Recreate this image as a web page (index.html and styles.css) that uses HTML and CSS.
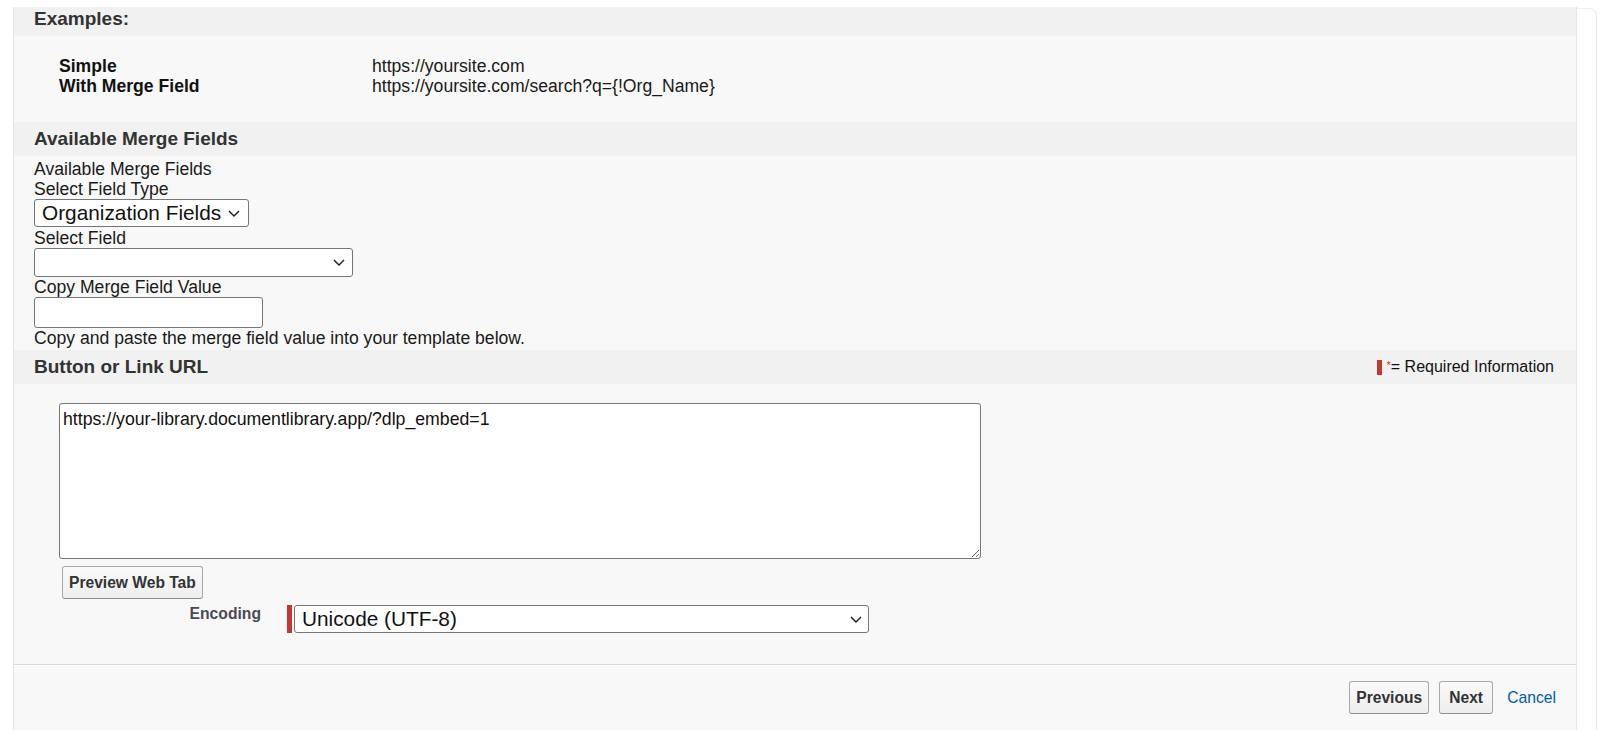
FILE: index.html
```html
<!DOCTYPE html>
<html lang="en">
<head>
<meta charset="utf-8">
<title>Button or Link URL</title>
<link rel="stylesheet" href="styles.css">
</head>
<body>
<div class="page">
  <div class="panel">
    <div class="band band-first">Examples:</div>
    <div class="examples">
      <div class="ex-label">Simple</div>
      <div class="ex-value">https://yoursite.com</div>
      <div class="ex-label">With Merge Field</div>
      <div class="ex-value">https://yoursite.com/search?q={!Org_Name}</div>
    </div>

    <div class="band">Available Merge Fields</div>
    <div class="merge">
      <div class="line">Available Merge Fields</div>
      <div class="line">Select Field Type</div>
      <div class="select select-type" role="combobox">
        <span class="select-text">Organization Fields</span>
        <svg class="chev" width="12" height="7" viewBox="0 0 12 7"><path d="M1 1l5 5 5-5" fill="none" stroke="#1a1a1a" stroke-width="1.4"/></svg>
      </div>
      <div class="line">Select Field</div>
      <div class="select select-field" role="combobox">
        <span class="select-text"></span>
        <svg class="chev" width="12" height="7" viewBox="0 0 12 7"><path d="M1 1l5 5 5-5" fill="none" stroke="#1a1a1a" stroke-width="1.4"/></svg>
      </div>
      <div class="line">Copy Merge Field Value</div>
      <input class="copy-input" type="text" value="">
      <div class="line">Copy and paste the merge field value into your template below.</div>
    </div>

    <div class="band band-split">
      <span>Button or Link URL</span>
      <span class="legend"><span class="req-bar"></span><span class="req-star">*</span>= Required Information</span>
    </div>
    <div class="url">
      <textarea class="url-area" spellcheck="false">https://your-library.documentlibrary.app/?dlp_embed=1</textarea>
      <div class="preview-row"><button class="btn" type="button">Preview Web Tab</button></div>
      <div class="enc-row">
        <div class="enc-label">Encoding</div>
        <div class="req-field">
          <span class="req-bar tall"></span>
          <div class="select select-enc" role="combobox">
            <span class="select-text">Unicode (UTF-8)</span>
            <svg class="chev" width="12" height="7" viewBox="0 0 12 7"><path d="M1 1l5 5 5-5" fill="none" stroke="#1a1a1a" stroke-width="1.4"/></svg>
          </div>
        </div>
      </div>
    </div>

    <div class="footer">
      <button class="btn" type="button">Previous</button>
      <button class="btn" type="button">Next</button>
      <a class="cancel" href="#">Cancel</a>
    </div>
  </div>
  <div class="side"></div>
</div>
</body>
</html>
```
FILE: styles.css
```css
* { box-sizing: border-box; }
html, body {
  margin: 0;
  padding: 0;
  background: #ffffff;
  height: 730px;
  overflow: hidden;
}
body {
  font-family: "Liberation Sans", Arial, sans-serif;
  font-size: 17.6px;
  color: #1a1a1a;
}
.page {
  display: flex;
  align-items: stretch;
  height: 730px;
  padding: 7px 0 0 13px;
}
.panel {
  width: 1564px;
  background: #f8f8f8;
  border-left: 1px solid #e4e4e4;
  border-right: 1px solid #e4e4e4;
  display: flex;
  flex-direction: column;
}
.side {
  width: 20px;
  border-top: 1px solid #eeeeee;
  border-right: 1px solid #e8e8e8;
  border-top-right-radius: 8px;
  margin-top: 1px;
}
.band {
  background: #f1f1f1;
  height: 34px;
  line-height: 34px;
  padding: 0 22px 0 20px;
  font-size: 19px;
  font-weight: bold;
  color: #333333;
}
.band-first {
  height: 29px;
  line-height: 24px;
}
.band-split {
  display: flex;
  justify-content: space-between;
  align-items: center;
}
.examples {
  display: grid;
  grid-template-columns: 313px auto;
  line-height: 20px;
  padding: 20px 0 26px 45px;
}
.ex-label { font-weight: bold; color: #111; }
.ex-value { color: #1a1a1a; }

.merge {
  padding: 3px 20px 2px 20px;
  display: flex;
  flex-direction: column;
  align-items: flex-start;
}
.line { line-height: 20px; }

.select {
  display: flex;
  align-items: center;
  justify-content: space-between;
  background: #ffffff;
  border: 1px solid #767676;
  border-radius: 3px;
  font-size: 20.8px;
  color: #111;
  padding: 0 7px 0 7px;
}
.select-text { white-space: nowrap; }
.chev { flex: none; display: block; }
.select-type {
  height: 28px;
  margin-bottom: 1px;
  gap: 7px;
  padding-right: 8px;
}
.select-field {
  width: 319px;
  height: 29px;
  padding-right: 7px;
}
.copy-input {
  width: 229px;
  height: 31px;
  border: 1px solid #767676;
  border-radius: 3px;
  background: #fff;
  margin: 0;
  font-family: inherit;
  font-size: 17.6px;
}

.url {
  padding: 19px 20px 31px 45px;
}
.url-area {
  display: block;
  width: 922px;
  height: 156px;
  margin: 0;
  border: 1px solid #767676;
  border-radius: 3px;
  background: #fff;
  padding: 4px 3px;
  font-family: "Liberation Sans", Arial, sans-serif;
  font-size: 17.7px;
  line-height: 22px;
  color: #111;
  resize: both;
}
.preview-row {
  margin: 7px 0 0 3px;
}
.btn {
  height: 33px;
  min-width: 54px;
  padding: 0 6px;
  border: 1px solid #a9a9a9;
  border-bottom-color: #8e8e8e;
  border-radius: 3px;
  background: linear-gradient(#fafafa, #eeeeee);
  font-family: "Liberation Sans", Arial, sans-serif;
  font-size: 15.6px;
  font-weight: bold;
  color: #333333;
  cursor: pointer;
}
.enc-row {
  display: flex;
  align-items: flex-start;
  margin-top: 6px;
}
.enc-label {
  width: 202px;
  text-align: right;
  font-size: 15.7px;
  font-weight: bold;
  line-height: 17px;
  color: #4a4a56;
  margin-right: 26px;
}
.req-field {
  display: flex;
  align-items: stretch;
}
.req-bar {
  display: inline-block;
  width: 5px;
  height: 15px;
  background: #c23934;
}
.req-bar.tall {
  height: 28px;
  margin-right: 2px;
}
.select-enc {
  width: 575px;
  height: 28px;
  padding-right: 6px;
}
.legend {
  display: flex;
  align-items: center;
  font-size: 16px;
  font-weight: normal;
  color: #111;
}
.legend .req-bar { margin-right: 5px; }
.req-star {
  color: #c23934;
  font-size: 11px;
  align-self: flex-start;
  line-height: 12px;
  margin-top: 9px;
}

.footer {
  flex: 1;
  border-top: 1px solid #d6d6d6;
  box-shadow: inset 0 1px 0 #ffffff;
  display: flex;
  justify-content: flex-end;
  align-items: flex-start;
  gap: 10px;
  padding: 16px 20px 0 0;
}
.cancel {
  margin-left: 4px;
  height: 33px;
  line-height: 33px;
  font-size: 15.7px;
  color: #015ba7;
  text-decoration: none;
}
```
